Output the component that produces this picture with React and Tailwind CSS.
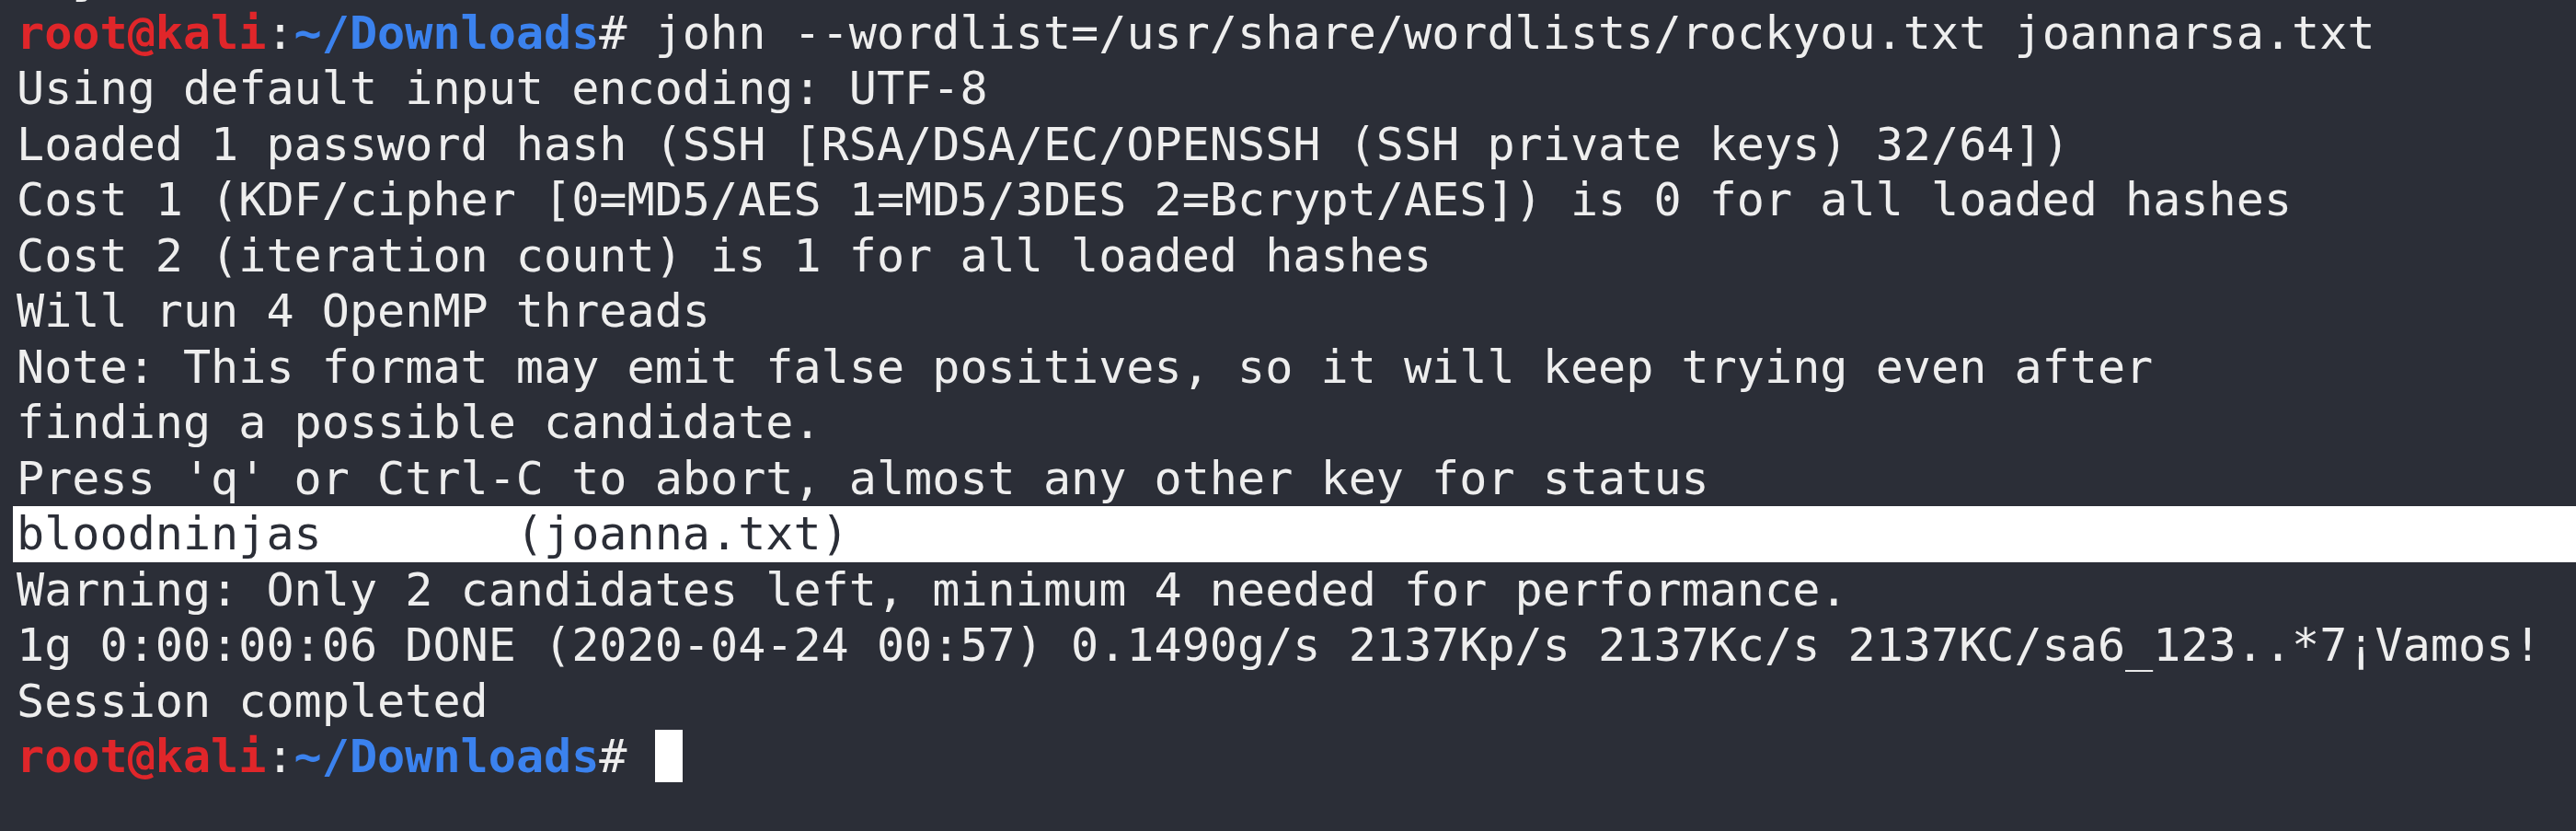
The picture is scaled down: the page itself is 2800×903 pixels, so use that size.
export default function App() {
  const font = { fontFamily: '"DejaVu Sans Mono", "Liberation Mono", monospace' };
  const lines = [
    "Using default input encoding: UTF-8",
    "Loaded 1 password hash (SSH [RSA/DSA/EC/OPENSSH (SSH private keys) 32/64])",
    "Cost 1 (KDF/cipher [0=MD5/AES 1=MD5/3DES 2=Bcrypt/AES]) is 0 for all loaded hashes",
    "Cost 2 (iteration count) is 1 for all loaded hashes",
    "Will run 4 OpenMP threads",
    "Note: This format may emit false positives, so it will keep trying even after",
    "finding a possible candidate.",
    "Press 'q' or Ctrl-C to abort, almost any other key for status",
  ];
  const Prompt = () => (
    <>
      <span className="font-bold text-[#e0262a]">root@kali</span>
      <span className="text-[#eeeeee]">:</span>
      <span className="font-bold text-[#3b82ee]">~/Downloads</span>
      <span className="text-[#eeeeee]">#</span>
    </>
  );
  const row = "h-[60.5px] leading-[60.5px] pl-[4px] whitespace-pre";
  return (
    <div
      className="w-full h-[903px] overflow-hidden bg-[#2b2e37] text-[#eeeeee] text-[50.1px] pl-[14px] pt-[5.5px]"
      style={font}
    >
      <div className={row + " -mt-[60.5px]"}>{"  j"}</div>
      <div className={row}>
        <Prompt />
        {" john --wordlist=/usr/share/wordlists/rockyou.txt joannarsa.txt"}
      </div>
      {lines.map((l, i) => (
        <div key={i} className={row}>
          {l}
        </div>
      ))}
      <div className={row + " bg-white text-[#2b2e37]"}>{"bloodninjas       (joanna.txt)"}</div>
      <div className={row}>Warning: Only 2 candidates left, minimum 4 needed for performance.</div>
      <div className={row}>
        {"1g 0:00:00:06 DONE (2020-04-24 00:57) 0.1490g/s 2137Kp/s 2137Kc/s 2137KC/sa6_123..*7¡Vamos!"}
      </div>
      <div className={row}>Session completed</div>
      <div className={row + " flex items-start"}>
        <Prompt />
        <span> </span>
        <span className="inline-block w-[30px] h-[57px] mt-[1px] bg-white"></span>
      </div>
    </div>
  );
}
